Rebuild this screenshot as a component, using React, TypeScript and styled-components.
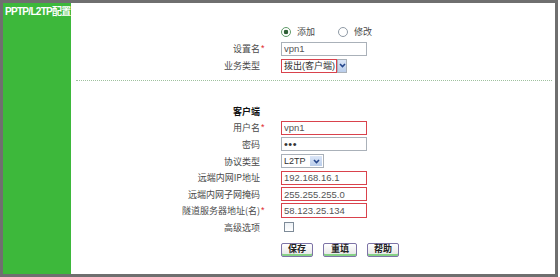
import React from "react";
import styled, { createGlobalStyle } from "styled-components";

const GlobalStyle = createGlobalStyle`
  html, body {
    margin: 0;
    padding: 0;
    background: #fff;
  }
  body {
    width: 560px;
    height: 277px;
    overflow: hidden;
    font-family: "Liberation Sans", "Noto Sans CJK SC", sans-serif;
  }
`;

const Frame = styled.div`
  width: 558px;
  height: 277px;
  box-sizing: border-box;
  border: 3px solid #6f6f6f;
  display: flex;
`;

const Side = styled.div`
  width: 68px;
  flex: none;
  box-sizing: border-box;
  padding: 3px 0 0 2px;
  background: #3db83b;
  color: #fff;
  font-size: 10px;
  font-weight: bold;
  line-height: 12px;
  letter-spacing: -0.7px;
  white-space: nowrap;
`;

const Main = styled.div`
  flex: 1;
  padding-top: 20px;
`;

const Grid = styled.div<{ $row: number }>`
  display: grid;
  grid-template-columns: 189px 21px 1fr;
  grid-auto-rows: ${(p) => p.$row}px;
  align-items: center;
`;

const Label = styled.div<{ $bold?: boolean }>`
  grid-column: 1;
  text-align: right;
  font-family: "Noto Sans CJK SC", sans-serif;
  font-size: 9px;
  font-weight: ${(p) => (p.$bold ? 700 : 400)};
  color: ${(p) => (p.$bold ? "#111" : "#4a4a4a")};
  white-space: nowrap;
`;

const Mark = styled.div`
  grid-column: 2;
  padding-left: 1px;
  color: #e0282e;
  font-size: 9px;
  line-height: 9px;
`;

const Field = styled.div`
  grid-column: 3;
  display: flex;
  align-items: center;
`;

const Radio = styled.input.attrs({ type: "radio" })`
  appearance: none;
  margin: 0;
  width: 10px;
  height: 10px;
  border-radius: 50%;
  border: 1px solid #8f9aa5;
  background: #fff;
  &:checked {
    border-color: #5f9a68;
    background: radial-gradient(circle, #2f5f35 0 2px, #fff 2.6px);
  }
`;

const RadioText = styled.span`
  margin: 0 23px 0 6px;
  font-family: "Noto Sans CJK SC", sans-serif;
  font-size: 9px;
  color: #4a4a4a;
`;

const TextBox = styled.input<{ $bad?: boolean; $h?: number }>`
  width: 86px;
  height: ${(p) => p.$h || 14}px;
  box-sizing: border-box;
  margin: 0;
  padding: 0 2px;
  border: 1px solid ${(p) => (p.$bad ? "#d9424c" : "#aab1b9")};
  font: 9.5px "Liberation Sans", sans-serif;
  color: #555;
  outline: none;
  background: #fff;
  &[type="password"] {
    font-size: 11px;
    letter-spacing: 0.5px;
    color: #333;
  }
`;

const SelectWrap = styled.div<{ $bad?: boolean }>`
  display: inline-flex;
  height: 14px;
  box-sizing: border-box;
  border: 1px solid #aab1b9;
  border-width: ${(p) => (p.$bad ? 0 : 1)}px;
`;

const SelectText = styled.span<{ $bad?: boolean; $w: number }>`
  width: ${(p) => p.$w}px;
  box-sizing: border-box;
  padding-left: 2px;
  border: ${(p) => (p.$bad ? "1px solid #d9424c" : "none")};
  font-family: "Liberation Sans", "Noto Sans CJK SC", sans-serif;
  font-size: 9px;
  line-height: 12px;
  color: #333;
  white-space: nowrap;
  overflow: hidden;
`;

const Arrow = styled.span<{ $bad?: boolean }>`
  width: ${(p) => (p.$bad ? 10 : 12)}px;
  box-sizing: border-box;
  margin: ${(p) => (p.$bad ? 0 : 1)}px;
  border: ${(p) => (p.$bad ? "1px solid #aab1b9" : "none")};
  background: linear-gradient(#dbe6f7, #b9cdeb);
  display: flex;
  align-items: center;
  justify-content: center;
`;

const Divider = styled.div`
  margin: 6px 3px 0 5px;
  border-top: 1px dotted #9fc19f;
`;

const Section = styled.div`
  margin-top: 22px;
`;

const Check = styled.input.attrs({ type: "checkbox" })`
  appearance: none;
  margin: 0 0 0 3px;
  width: 10px;
  height: 10px;
  border: 1px solid #7e8b98;
  background: linear-gradient(#eef2f6, #fff);
`;

const Buttons = styled.div`
  display: flex;
  gap: 10px;
  margin: 7px 0 0 210px;
`;

const Btn = styled.button<{ $w: number }>`
  width: ${(p) => p.$w}px;
  height: 14px;
  padding: 0 0 2px;
  border: 1px solid #7d73a6;
  border-radius: 2px;
  background: linear-gradient(#ffffff, #e4e4e4);
  box-shadow: inset 0 -2px 0 #86d186;
  font-family: "Noto Sans CJK SC", sans-serif;
  font-size: 9px;
  font-weight: 700;
  line-height: 10px;
  color: #222;
`;

function Chevron() {
  return (
    <svg width="7" height="5" viewBox="0 0 7 5">
      <path d="M1 1 L3.5 3.5 L6 1" fill="none" stroke="#25468c" strokeWidth="1.6" />
    </svg>
  );
}

function Select({ text, w, bad }: { text: string; w: number; bad?: boolean }) {
  return (
    <SelectWrap $bad={bad}>
      <SelectText $w={w} $bad={bad}>
        {text}
      </SelectText>
      <Arrow $bad={bad}>
        <Chevron />
      </Arrow>
    </SelectWrap>
  );
}

const rows = [
  { label: "用户名", req: true, value: "vpn1", bad: true },
  { label: "密码", value: "abc", pwd: true },
  { label: "协议类型", select: "L2TP" },
  { label: "远端内网IP地址", value: "192.168.16.1", bad: true },
  { label: "远端内网子网掩码", value: "255.255.255.0", bad: true },
  { label: "隧道服务器地址(名)", req: true, value: "58.123.25.134", bad: true, h: 15 },
];

export default function App() {
  return (
    <>
      <GlobalStyle />
      <Frame>
        <Side>PPTP/L2TP配置</Side>
        <Main>
          <Grid $row={17}>
            <Field>
              <Radio name="mode" defaultChecked />
              <RadioText>添加</RadioText>
              <Radio name="mode" />
              <RadioText>修改</RadioText>
            </Field>
            <Label>设置名</Label>
            <Mark>*</Mark>
            <Field>
              <TextBox defaultValue="vpn1" />
            </Field>
            <Label>业务类型</Label>
            <Field>
              <Select text="拨出(客户端)" w={56} bad />
            </Field>
          </Grid>
          <Divider />
          <Section>
            <Grid $row={16.6}>
              <Label $bold>客户端</Label>
              {rows.map((r, index) => (
                <React.Fragment key={index}>
                  <Label>{r.label}</Label>
                  {r.req && <Mark>*</Mark>}
                  <Field>
                    {r.select ? (
                      <Select text={r.select} w={27} />
                    ) : (
                      <TextBox
                        type={r.pwd ? "password" : "text"}
                        defaultValue={r.value}
                        $bad={r.bad}
                        $h={r.h}
                      />
                    )}
                  </Field>
                </React.Fragment>
              ))}
              <Label>高级选项</Label>
              <Field>
                <Check />
              </Field>
            </Grid>
            <Buttons>
              <Btn $w={32}>保存</Btn>
              <Btn $w={34}>重填</Btn>
              <Btn $w={32}>帮助</Btn>
            </Buttons>
          </Section>
        </Main>
      </Frame>
    </>
  );
}
